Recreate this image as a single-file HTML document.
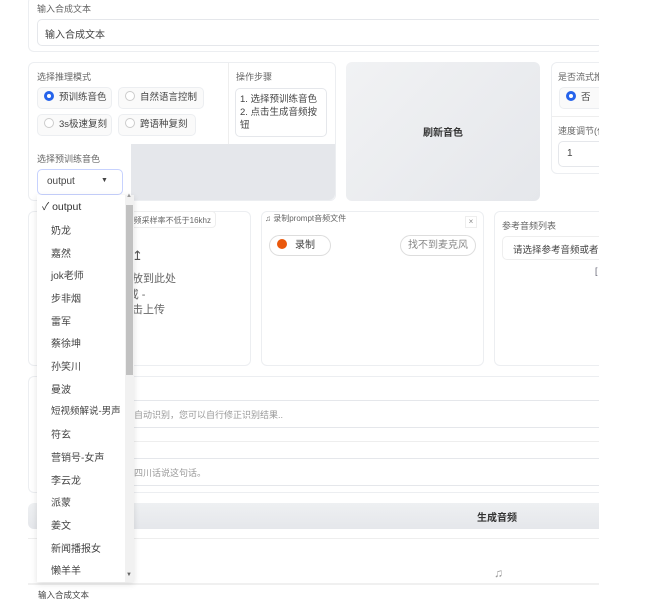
<!DOCTYPE html>
<html><head><meta charset="utf-8"><style>
*{margin:0;padding:0;box-sizing:border-box}
body{width:665px;height:601px;background:#fff;position:relative;overflow:hidden;font-family:"Liberation Sans","Noto Sans CJK SC",sans-serif;color:#333}
div{white-space:nowrap}
.a{position:absolute}
.p{position:absolute;border:1px solid #eceef1;border-radius:6px;background:#fff}
.lbl{position:absolute;font-size:9px;color:#666}
.inp{position:absolute;border:1px solid #e5e7eb;border-radius:5px;background:#fff;font-size:10px;color:#444;overflow:hidden}
.rad{position:absolute;border:1px solid #eceef1;border-radius:5px;background:#fafafa;font-size:9.5px;color:#444;height:22px;line-height:20px;overflow:hidden}
.dot{display:inline-block;width:10px;height:10px;border-radius:50%;border:1px solid #ccc;vertical-align:-1px;margin:0 5px 0 6px;background:#fff}
.on{border:3px solid #2563eb}
.it{position:absolute;left:51px;font-size:10px;color:#444}
</style></head><body>
<div class="p" style="left:28px;top:-4px;width:575px;height:56px;border-right:none"></div>
<div class="lbl" style="left:37px;top:2px">输入合成文本</div>
<div class="inp" style="left:37px;top:19px;width:570px;height:27px;padding:6px 7px;border-right:none">输入合成文本</div>

<div class="p" style="left:28px;top:62px;width:308px;height:139px"></div>
<div class="lbl" style="left:37px;top:70px">选择推理模式</div>
<div class="rad" style="left:37px;top:87px;width:75px"><span class="dot on"></span>预训练音色</div>
<div class="rad" style="left:118px;top:87px;width:86px"><span class="dot"></span>自然语言控制</div>
<div class="rad" style="left:37px;top:114px;width:75px"><span class="dot"></span>3s极速复刻</div>
<div class="rad" style="left:118px;top:114px;width:78px"><span class="dot"></span>跨语种复刻</div>
<div class="a" style="left:228px;top:63px;width:1px;height:81px;background:#eee"></div>
<div class="lbl" style="left:236px;top:70px">操作步骤</div>
<div class="inp" style="left:235px;top:88px;width:92px;height:49px;padding:4px 4px;font-size:9.5px;line-height:13px">1. 选择预训练音色<br>2. 点击生成音频按<br>钮</div>
<div class="a" style="left:131px;top:144px;width:204px;height:56px;background:#e5e7eb;border-radius:0 0 6px 0"></div>
<div class="lbl" style="left:37px;top:152px">选择预训练音色</div>
<div class="inp" style="left:37px;top:169px;width:86px;height:26px;padding:6px 9px;border-color:#c7d2fe">output<span style="position:absolute;left:63px;top:7px;font-size:7px">▼</span></div>

<div class="a" style="left:346px;top:62px;width:194px;height:139px;border-radius:6px;background:linear-gradient(135deg,#f1f2f4,#e5e7eb)"></div>
<div class="a" style="left:346px;top:124px;width:194px;text-align:center;font-size:10px;font-weight:bold;color:#333">刷新音色</div>

<div class="p" style="left:551px;top:62px;width:60px;height:112px"></div>
<div class="lbl" style="left:558px;top:70px">是否流式推理</div>
<div class="rad" style="left:559px;top:87px;width:50px"><span class="dot on"></span>否</div>
<div class="a" style="left:552px;top:116px;width:50px;height:1px;background:#eee"></div>
<div class="lbl" style="left:558px;top:124px">速度调节(仅</div>
<div class="inp" style="left:558px;top:141px;width:50px;height:26px;padding:6px 8px">1</div>

<div class="p" style="left:28px;top:211px;width:223px;height:155px"></div>
<div class="a" style="left:60px;top:211px;width:156px;height:17px;border:1px solid #eee;border-radius:4px;font-size:8px;color:#666;padding:3px 4px;text-align:right">请确保音频采样率不低于16khz</div>
<div class="a" style="left:132px;top:248px;font-size:13px;color:#555">↥</div>
<div class="a" style="left:121px;top:272px;font-size:11px;color:#666;line-height:15.5px">拖放到此处<br>- 或 -<br>点击上传</div>

<div class="p" style="left:261px;top:211px;width:223px;height:155px"></div>
<div class="a" style="left:265px;top:213px;font-size:8px;color:#666">♫ 录制prompt音频文件</div>
<div class="a" style="left:465px;top:216px;width:12px;height:12px;border:1px solid #eee;font-size:8px;color:#888;text-align:center;line-height:10px">×</div>
<div class="a" style="left:269px;top:235px;width:62px;height:21px;border:1px solid #ddd;border-radius:11px;font-size:10px;color:#444;line-height:19px"><span style="display:inline-block;width:10px;height:10px;border-radius:50%;background:#ea580c;margin:0 8px 0 7px;vertical-align:-1px"></span>录制</div>
<div class="a" style="left:400px;top:235px;width:76px;height:21px;border:1px solid #ddd;border-radius:11px;font-size:10px;color:#888;line-height:19px;text-align:center">找不到麦克风</div>

<div class="p" style="left:494px;top:211px;width:120px;height:155px"></div>
<div class="lbl" style="left:502px;top:219px">参考音频列表</div>
<div class="inp" style="left:502px;top:236px;width:110px;height:24px;padding:5px 10px;font-size:9.5px;border-color:#eee">请选择参考音频或者自</div>
<div class="a" style="left:595px;top:266px;font-size:9px;color:#667">[</div>

<div class="p" style="left:28px;top:376px;width:585px;height:117px;border-right:none"></div>
<div class="inp" style="left:37px;top:400px;width:575px;height:28px;padding:7px 0 0 60px;font-size:9px;color:#999;border-right:none">音频支持自动识别，您可以自行修正识别结果..</div>
<div class="a" style="left:37px;top:441px;width:575px;height:1px;background:#eee"></div>
<div class="inp" style="left:37px;top:458px;width:575px;height:28px;padding:7px 0 0 69px;font-size:9px;color:#999;border-right:none">例如用四川话说这句话。</div>

<div class="a" style="left:28px;top:503px;width:575px;height:26px;border-radius:6px 0 0 6px;background:linear-gradient(#eef0f2,#e5e7eb)"></div>
<div class="a" style="left:477px;top:509px;font-size:10px;font-weight:bold;color:#333">生成音频</div>
<div class="a" style="left:28px;top:538px;width:575px;height:1px;background:#eee"></div>
<div class="a" style="left:494px;top:566px;font-size:12px;color:#999">♫</div>
<div class="a" style="left:28px;top:583px;width:575px;height:2px;background:#f0f0f0"></div>
<div class="a" style="left:38px;top:589px;font-size:8.5px;color:#444">输入合成文本</div>

<div class="a" style="left:599px;top:0;width:66px;height:601px;background:#fff"></div>

<div class="a" style="left:37px;top:195px;width:97px;height:387px;background:#fff;box-shadow:0 2px 6px rgba(0,0,0,.12)"></div>
<div class="a" style="left:125px;top:195px;width:9px;height:387px;background:#f1f1f1"></div>
<div class="a" style="left:126px;top:205px;width:7px;height:170px;background:#c1c1c1"></div>
<div class="a" style="left:126px;top:193px;font-size:6px;color:#999">▲</div>
<div class="a" style="left:126px;top:572px;font-size:6px;color:#666">▼</div>
<div class="a" style="left:42px;top:199px;font-size:10.5px;color:#333">✓ output</div>
<div class="it" style="top:222px">奶龙</div>
<div class="it" style="top:245px">嘉然</div>
<div class="it" style="top:267px">jok老师</div>
<div class="it" style="top:290px">步非烟</div>
<div class="it" style="top:313px">雷军</div>
<div class="it" style="top:335px">蔡徐坤</div>
<div class="it" style="top:358px">孙笑川</div>
<div class="it" style="top:381px">曼波</div>
<div class="it" style="top:403px;font-size:9.5px">短视频解说-男声</div>
<div class="it" style="top:426px">符玄</div>
<div class="it" style="top:449px">营销号-女声</div>
<div class="it" style="top:472px">李云龙</div>
<div class="it" style="top:494px">派蒙</div>
<div class="it" style="top:517px">姜文</div>
<div class="it" style="top:540px">新闻播报女</div>
<div class="it" style="top:562px">懒羊羊</div>
</body></html>
